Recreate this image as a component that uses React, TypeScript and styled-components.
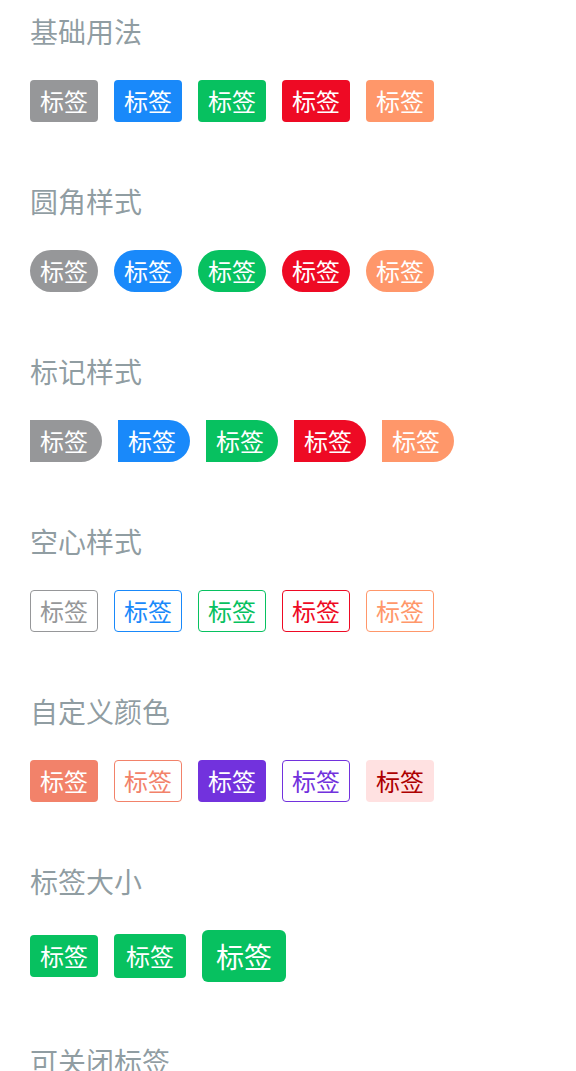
import styled, { createGlobalStyle, css } from "styled-components";

const GlobalStyle = createGlobalStyle`
  body {
    margin: 0;
    background: #ffffff;
    font-family: "Noto Sans CJK SC", "Noto Sans", sans-serif;
  }
`;

type Size = "normal" | "medium" | "large";
type Shape = "square" | "round" | "mark";

interface ITagProps {
  $color: string;
  $text?: string;
  $plain?: boolean;
  $shape?: Shape;
  $size?: Size;
}

const sizes = {
  normal: css`
    height: 42px;
    padding: 0 10px;
    font-size: 24px;
  `,
  medium: css`
    height: 44px;
    padding: 0 12px;
    font-size: 24px;
  `,
  large: css`
    height: 52px;
    padding: 0 14px;
    font-size: 28px;
    border-radius: 6px;
  `,
};

const Tag = styled.span<ITagProps>`
  display: inline-flex;
  align-items: center;
  box-sizing: border-box;
  line-height: 1;
  border-radius: 4px;
  white-space: nowrap;
  ${({ $size = "normal" }) => sizes[$size]}
  ${({ $plain, $color, $text }) =>
    $plain
      ? css`
          background: #ffffff;
          border: 1px solid ${$color};
          color: ${$text ?? $color};
          padding-left: 9px;
          padding-right: 9px;
        `
      : css`
          background: ${$color};
          color: ${$text ?? "#ffffff"};
        `}
  ${({ $shape }) =>
    $shape === "round" &&
    css`
      border-radius: 21px;
    `}
  ${({ $shape }) =>
    $shape === "mark" &&
    css`
      border-radius: 0 21px 21px 0;
      padding-right: 14px;
    `}
`;

const Page = styled.div`
  padding: 16px 30px 40px;
`;

const Section = styled.section`
  & + & {
    margin-top: 64px;
  }
`;

const Title = styled.h2`
  margin: 0 0 32px;
  font-size: 28px;
  line-height: 30px;
  padding-bottom: 2px;
  font-weight: 400;
  color: rgba(69, 90, 100, 0.6);
`;

const Row = styled.div`
  display: flex;
  align-items: center;
  gap: 16px;
`;

const CloseIcon = styled.span`
  margin-left: 4px;
  font-size: 22px;
`;

const base = ["#969799", "#1989fa", "#07c160", "#ee0a24", "#ff976a"];

export default function App() {
  return (
    <>
      <GlobalStyle />
      <Page>
        <Section>
          <Title>基础用法</Title>
          <Row>
            {base.map((c) => (
              <Tag key={c} $color={c}>标签</Tag>
            ))}
          </Row>
        </Section>
        <Section>
          <Title>圆角样式</Title>
          <Row>
            {base.map((c) => (
              <Tag key={c} $color={c} $shape="round">标签</Tag>
            ))}
          </Row>
        </Section>
        <Section>
          <Title>标记样式</Title>
          <Row>
            {base.map((c) => (
              <Tag key={c} $color={c} $shape="mark">标签</Tag>
            ))}
          </Row>
        </Section>
        <Section>
          <Title>空心样式</Title>
          <Row>
            {base.map((c) => (
              <Tag key={c} $color={c} $plain>标签</Tag>
            ))}
          </Row>
        </Section>
        <Section>
          <Title>自定义颜色</Title>
          <Row>
            <Tag $color="#f2826a">标签</Tag>
            <Tag $color="#f2826a" $plain>标签</Tag>
            <Tag $color="#7232dd">标签</Tag>
            <Tag $color="#7232dd" $plain>标签</Tag>
            <Tag $color="#ffe1e1" $text="#ad0000">标签</Tag>
          </Row>
        </Section>
        <Section>
          <Title>标签大小</Title>
          <Row>
            <Tag $color="#07c160">标签</Tag>
            <Tag $color="#07c160" $size="medium">标签</Tag>
            <Tag $color="#07c160" $size="large">标签</Tag>
          </Row>
        </Section>
        <Section>
          <Title>可关闭标签</Title>
          <Row>
            <Tag $color="#1989fa" $size="medium">
              标签<CloseIcon>×</CloseIcon>
            </Tag>
            <Tag $color="#1989fa" $size="medium" $plain>
              标签<CloseIcon>×</CloseIcon>
            </Tag>
          </Row>
        </Section>
      </Page>
    </>
  );
}
